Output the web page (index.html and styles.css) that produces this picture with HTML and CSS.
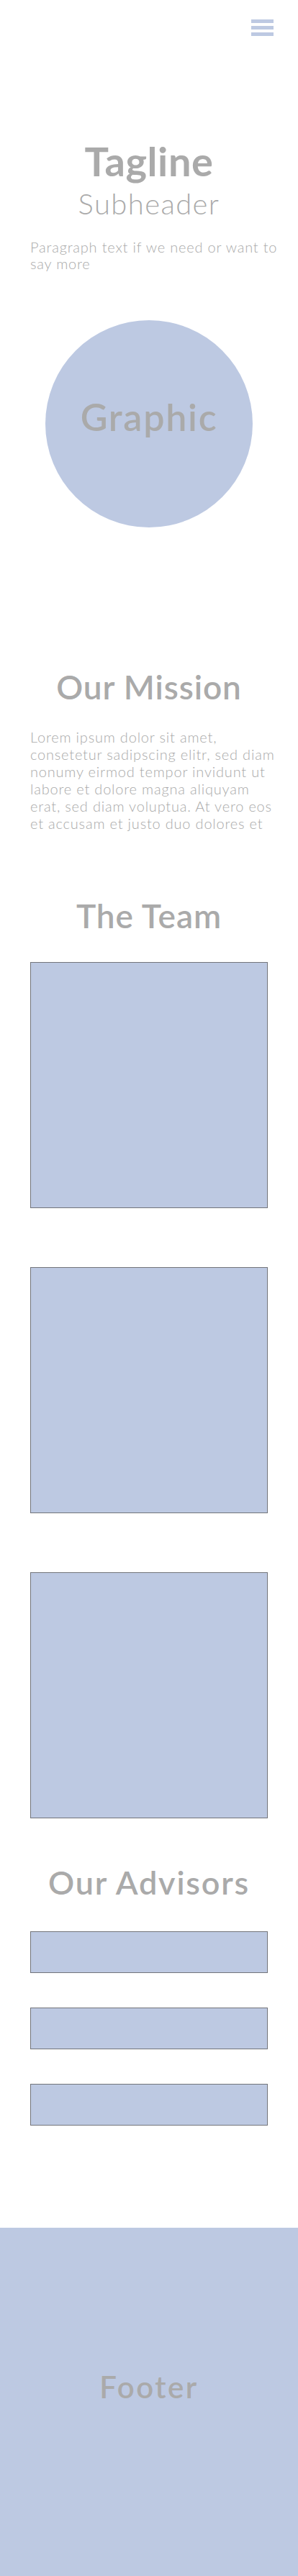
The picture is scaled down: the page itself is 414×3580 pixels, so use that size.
FILE: index.html
```html
<!DOCTYPE html>
<html lang="en">

<head>
    <meta charset="UTF-8">
    <meta name="viewport" content="width=device-width, initial-scale=1.0">
    <title>Landing</title>

    <link rel="stylesheet" href="styles.css">
</head>

<body>
    <header class="topbar">
        <div class="menu">
            <span></span>
            <span></span>
            <span></span>
        </div>
    </header>

    <section class="hero">
        <h1 class="tagline">Tagline</h1>
        <h2 class="subheader">Subheader</h2>
        <p class="lead">Paragraph text if we need or want to say more</p>
        <div class="graphic">Graphic</div>
    </section>

    <section class="mission">
        <h2 class="title">Our Mission</h2>
        <p class="bodyText">Lorem ipsum dolor sit amet, consetetur sadipscing elitr, sed diam nonumy eirmod tempor invidunt ut labore et dolore magna aliquyam erat, sed diam voluptua. At vero eos et accusam et justo duo dolores et</p>
    </section>

    <section class="team">
        <h2 class="title">The Team</h2>
        <div class="member"></div>
        <div class="member"></div>
        <div class="member"></div>
    </section>

    <section class="advisors">
        <h2 class="title">Our Advisors</h2>
        <div class="advisor"></div>
        <div class="advisor"></div>
        <div class="advisor"></div>
    </section>

    <footer class="footer">Footer</footer>
</body>

</html>
```

FILE: styles.css
```css
* {
    padding: 0;
    margin: 0;
    box-sizing: border-box;
}

body {
    font-family: Lato, "Open Sans", sans-serif;
    color: #aaa;
    background-color: #fff;
}

/* top bar */
.topbar {
    display: flex;
    justify-content: flex-end;
    padding: 27px 34px 0;
}

.menu {
    width: 31px;
    display: flex;
    flex-direction: column;
    gap: 4px;
}

.menu span {
    display: block;
    height: 5px;
    background-color: #bdc9e2;
}

/* hero */
.hero {
    padding-top: 146px;
    text-align: center;
}

.tagline {
    font-size: 56px;
    line-height: 56px;
    font-weight: 700;
    letter-spacing: 0.6px;
}

.subheader {
    margin-top: 11px;
    font-size: 40px;
    line-height: 40px;
    font-weight: 300;
    letter-spacing: 1.4px;
}

.lead {
    margin: 29px 26px 0 42px;
    text-align: left;
    font-size: 20px;
    line-height: 23px;
    font-weight: 300;
    letter-spacing: 0.8px;
}

.graphic {
    width: 288px;
    height: 288px;
    margin: 67px auto 0;
    border-radius: 50%;
    background-color: #bdc9e2;
    display: flex;
    justify-content: center;
    align-items: center;
    padding-bottom: 20px;
    font-size: 52px;
    line-height: 52px;
    font-weight: 600;
    letter-spacing: 1.7px;
}

/* sections */
.title {
    text-align: center;
    font-size: 46px;
    line-height: 46px;
    font-weight: 600;
    letter-spacing: 0.9px;
}

.mission {
    padding-top: 199px;
}

.bodyText {
    margin: 34px 26px 0 42px;
    font-size: 20px;
    line-height: 24px;
    font-weight: 300;
    letter-spacing: 0.8px;
}

.team {
    padding-top: 94px;
}

.member {
    width: 330px;
    height: 342px;
    margin: 82px 0 0 42px;
    background-color: #bdc9e2;
    border: 1px solid #72747a;
}

.member:first-of-type {
    margin-top: 41px;
}

.advisors {
    padding-top: 67px;
}

.advisors .title {
    font-size: 45px;
    line-height: 45px;
    letter-spacing: 1.8px;
}

.advisor {
    width: 330px;
    height: 58px;
    margin: 48px 0 0 42px;
    background-color: #bdc9e2;
    border: 1px solid #72747a;
}

.advisor:first-of-type {
    margin-top: 45px;
}

/* footer */
.footer {
    margin-top: 142px;
    height: 484px;
    padding-top: 200px;
    background-color: #bdc9e2;
    text-align: center;
    font-size: 42px;
    line-height: 42px;
    font-weight: 600;
    letter-spacing: 2.5px;
}
```
